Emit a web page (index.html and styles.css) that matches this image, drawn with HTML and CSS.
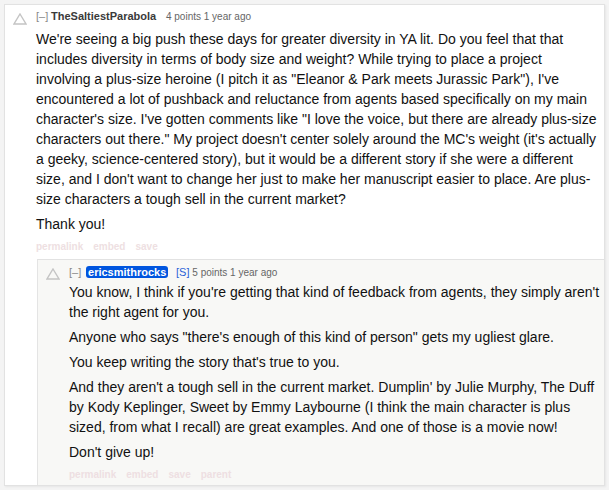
FILE: index.html
```html
<!DOCTYPE html>
<html>
<head>
<meta charset="utf-8">
<link rel="stylesheet" href="styles.css">
</head>
<body>
<div class="comment top">
  <div class="row">
    <div class="midcol">
      <svg class="arrow" width="14" height="12" viewBox="0 0 14 12"><path d="M7 1 L13 11 L1 11 Z" fill="none" stroke="#c4c4c4" stroke-width="1.4"/></svg>
    </div>
    <div class="entry">
      <p class="tagline"><span class="expand">[–]</span> <span class="author">TheSaltiestParabola</span> <span class="score">4 points</span> <span class="time">1 year ago</span></p>
      <div class="md">
        <p>We're seeing a big push these days for greater diversity in YA lit. Do you feel that that includes diversity in terms of body size and weight? While trying to place a project involving a plus-size heroine (I pitch it as "Eleanor &amp; Park meets Jurassic Park"), I've encountered a lot of pushback and reluctance from agents based specifically on my main character's size. I've gotten comments like "I love the voice, but there are already plus-size characters out there." My project doesn't center solely around the MC's weight (it's actually a geeky, science-centered story), but it would be a different story if she were a different size, and I don't want to change her just to make her manuscript easier to place. Are plus-size characters a tough sell in the current market?</p>
        <p>Thank you!</p>
      </div>
      <ul class="buttons"><li>permalink</li><li>embed</li><li>save</li></ul>
    </div>
  </div>
  <div class="comment child">
    <div class="row">
      <div class="midcol">
        <svg class="arrow" width="14" height="12" viewBox="0 0 14 12"><path d="M7 1 L13 11 L1 11 Z" fill="none" stroke="#c4c4c4" stroke-width="1.4"/></svg>
      </div>
      <div class="entry">
        <p class="tagline"><span class="expand">[–]</span> <span class="author submitter">ericsmithrocks</span> <span class="flag">[S]</span> <span class="score">5 points</span> <span class="time">1 year ago</span></p>
        <div class="md">
          <p>You know, I think if you're getting that kind of feedback from agents, they simply aren't the right agent for you.</p>
          <p>Anyone who says "there's enough of this kind of person" gets my ugliest glare.</p>
          <p>You keep writing the story that's true to you.</p>
          <p>And they aren't a tough sell in the current market. Dumplin' by Julie Murphy, The Duff by Kody Keplinger, Sweet by Emmy Laybourne (I think the main character is plus sized, from what I recall) are great examples. And one of those is a movie now!</p>
          <p>Don't give up!</p>
        </div>
        <ul class="buttons"><li>permalink</li><li>embed</li><li>save</li><li>parent</li></ul>
      </div>
    </div>
  </div>
</div>
</body>
</html>
```

FILE: styles.css
```css
html, body {
  margin: 0;
  padding: 0;
}
body {
  background: #f4f4f4;
  font-family: "Liberation Sans", Arial, Helvetica, sans-serif;
  color: #111;
  padding: 4px;
}
.comment.top {
  background: #ffffff;
  border: 1px solid #e2e2e2;
  box-shadow: 1px 1px 2px rgba(0,0,0,0.06);
}
.row {
  display: flex;
}
.midcol {
  width: 31px;
  flex: none;
  padding-top: 8px;
  padding-left: 8px;
  box-sizing: border-box;
}
.arrow {
  display: block;
}
.entry {
  flex: 1;
  min-width: 0;
  padding-right: 7px;
}
.tagline {
  margin: 0;
  padding-top: 5px;
  font-size: 10px;
  line-height: 12px;
  color: #666;
  white-space: nowrap;
}
.expand {
  color: #888;
  font-size: 11px;
}
.author {
  font-weight: bold;
  font-size: 11px;
  color: #3a3a3a;
  margin-right: 7px;
}
.author.submitter {
  background: #0055df;
  color: #fff;
  border-radius: 3px;
  padding: 0 2px;
  margin-left: 2px;
  margin-right: 5px;
}
.flag {
  color: #2a62d6;
  font-size: 11px;
}
.score, .time {
  color: #666;
}
.md {
  margin-top: 6px;
  font-size: 14px;
  line-height: 20px;
  color: #111;
}
.md p {
  margin: 0 0 5px 0;
}
.md p:last-child {
  margin-bottom: 0;
}
.buttons {
  list-style: none;
  margin: 7px 0 0 0;
  padding: 0;
  display: flex;
  gap: 10px;
  font-size: 10px;
  line-height: 12px;
  font-weight: bold;
  color: #eedfe2;
}
.comment.child {
  margin-top: 6px;
  margin-left: 32px;
  background: #f8f8f6;
  border-top: 1px solid #e2e2e2;
  border-left: 1px solid #e4e4e4;
  padding-bottom: 4px;
}
.child .entry {
  padding-right: 0;
}
.child .tagline {
  padding-top: 6px;
}
.child .md {
  margin-top: 3px;
}
.child .buttons {
  margin-top: 7px;
}
```
